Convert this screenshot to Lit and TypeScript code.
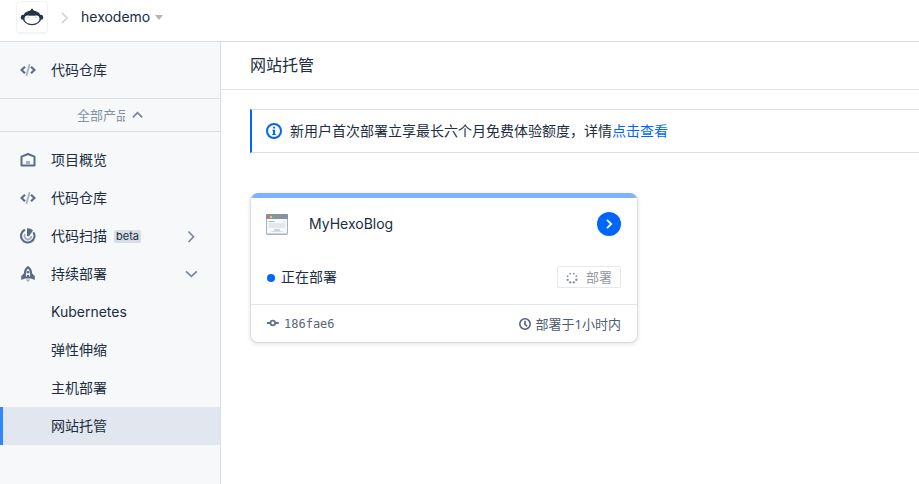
import { LitElement, html, css, svg, nothing, type TemplateResult } from "lit";
import { customElement } from "lit/decorators.js";
import { classMap } from "lit/directives/class-map.js";

const codeIcon = html`<svg class="icon" viewBox="0 0 16 16" fill="none" stroke="#5b6b83">
  <path d="M5 4.800 1.500 8 5 11.200M11 4.800 14.500 8 11 11.200" stroke-width="2.200" />
  <path d="M9.600 2.200 6.400 13.800" stroke="#a5b0c2" stroke-width="1.800" />
</svg>`;

const homeIcon = html`<svg class="icon" viewBox="0 0 16 16" fill="none">
  <path d="M1.500 13.500V4.700L8 2l6.500 2.700v8.800z" stroke="#5b6b83" stroke-width="2" stroke-linejoin="round" />
  <path d="M6 9h4v4H6z" fill="#a5b0c2" />
</svg>`;

const scanIcon = html`<svg class="icon" viewBox="0 0 16 16" fill="none">
  <path d="M5 1.700A6.700 6.700 0 1 0 13.400 4.200" stroke="#5b6b83" stroke-width="2.100" />
  <path d="M5.200 6A3.400 3.400 0 1 0 11.300 8" stroke="#a5b0c2" stroke-width="1.900" />
  <path d="M7 .300C9.600.200 11.500 1 13 2.400L8.800 8.600 7 8z" fill="#5b6b83" />
</svg>`;

const rocketIcon = html`<svg class="icon" viewBox="0 0 16 16" fill="none">
  <path d="M8 1.100C5.600 2.800 4.900 5 4.900 7.400V11.600h6.200V7.400C11.100 5 10.400 2.800 8 1.100z" stroke="#5b6b83" stroke-width="2" />
  <path d="M4.500 6.800 1.200 10.200V14L4.800 12.500zM11.500 6.800l3.300 3.400V14L11.200 12.500z" fill="#5b6b83" />
  <circle cx="8" cy="6.300" r="1.300" fill="#5b6b83" />
  <path d="M6.900 9h2.200v2.600H6.900z" fill="#5b6b83" />
  <path d="M5.800 13.400h4.400L8 16.200z" fill="#a5b0c2" />
</svg>`;

interface NavItem {
  label: string;
  icon?: TemplateResult;
  tag?: string;
  arrow?: "right" | "down";
  active?: boolean;
}

const NAV: NavItem[] = [
  { label: "项目概览", icon: homeIcon },
  { label: "代码仓库", icon: codeIcon },
  { label: "代码扫描", icon: scanIcon, tag: "beta", arrow: "right" },
  { label: "持续部署", icon: rocketIcon, arrow: "down" },
  { label: "Kubernetes" },
  { label: "弹性伸缩" },
  { label: "主机部署" },
  { label: "网站托管", active: true },
];

@customElement("top-bar")
export class TopBar extends LitElement {
  static styles = css`
    :host {
      display: flex;
      align-items: flex-start;
      height: 41px;
      border-bottom: 1px solid #d8dde6;
      padding-left: 16px;
      background: #fff;
      color: #202d40;
    }
    svg { display: block; }
    .logo {
      box-sizing: border-box;
      width: 32px;
      height: 32px;
      margin-top: 1px;
      padding: 6px 3px;
      border: 1px solid #f2f3f5;
      border-radius: 4px;
      box-shadow: 0 1px 2px rgba(32, 45, 64, 0.06);
    }
    .sep { margin: 12px 0 0 13px; }
    .name { margin-left: 12px; line-height: 34px; }
    .caret {
      margin: 15px 0 0 5px;
      border: 4px solid transparent;
      border-top: 5px solid #b3b5b9;
      border-bottom: 0;
    }
  `;

  render() {
    return html`
      <div class="logo">
        <svg width="24" height="18" viewBox="0 0 24 18">
          <ellipse cx="2.700" cy="9.300" rx="1.900" ry="2.500" fill="#263247" />
          <ellipse cx="21.300" cy="9.300" rx="1.900" ry="2.500" fill="#263247" />
          <ellipse cx="12" cy="9.800" rx="9.300" ry="7.400" fill="#263247" />
          <path d="M12 .300 15 4H9z" fill="#263247" />
          <path d="M4.500 11C4.500 8 6.200 7 8.700 7.500c1.300.3 2 .4 3.300.1 1.300.3 2 .2 3.300-.1 2.500-.5 4.200.5 4.200 3.500 0 3-3.300 4.900-7.500 4.900S4.500 14 4.500 11z" fill="#fff" />
          <path d="M7.400 9.300h1.800M14.800 9.300h1.800" stroke="#a8afba" stroke-width=".8" />
        </svg>
      </div>
      <svg class="sep" width="8" height="12" viewBox="0 0 8 12" fill="none" stroke="#d5d9e1" stroke-width="1.800"><path d="M1 .8 6.200 6 1 11.200" /></svg>
      <span class="name">hexodemo</span>
      <span class="caret"></span>
    `;
  }
}

@customElement("side-nav")
export class SideNav extends LitElement {
  static styles = css`
    :host {
      display: block;
      box-sizing: border-box;
      width: 221px;
      flex: none;
      background: #f6f8fa;
      border-right: 1px solid #d8dde6;
      color: #202d40;
    }
    .icon { width: 16px; height: 16px; flex: none; display: block; }
    .row {
      display: flex;
      align-items: center;
      box-sizing: border-box;
      height: 38px;
      padding: 0 22px 0 20px;
    }
    .pinned { height: 56px; }
    .label { margin-left: 15px; }
    .row.sub { padding-left: 36px; }
    .row.active { background: #e1e6ef; border-left: 3px solid #3385ff; padding-left: 33px; }
    .tag {
      margin: 1px 0 0 7px;
      height: 13px;
      line-height: 13px;
      padding: 0 2px;
      border-radius: 2px;
      background: #d8dde6;
      font-size: 11px;
    }
    .arrow { margin-left: auto; display: block; }
    .all {
      display: flex;
      justify-content: center;
      align-items: center;
      gap: 7px;
      height: 32px;
      border-top: 1px solid #d8dde6;
      border-bottom: 1px solid #d8dde6;
      font-size: 13px;
      color: #8592a6;
    }
    .clip { width: 48px; overflow: hidden; white-space: nowrap; }
    .list { padding-top: 9px; }
  `;

  private arrow(dir?: "right" | "down") {
    if (!dir) return nothing;
    const right = dir === "right";
    return html`<svg class="arrow" width="14" height="14" viewBox="0 0 14 14" fill="none" stroke="#76849c" stroke-width="1.600">
      ${right ? svg`<path d="M4.500 2.500 9.500 7.800 4.500 13" />` : svg`<path d="M2 4.300 7.400 9.300 12.800 4.300" />`}
    </svg>`;
  }

  private item(n: NavItem) {
    return html`<div class=${classMap({ row: true, sub: !n.icon, active: !!n.active })}>
      ${n.icon ?? nothing}<span class="label">${n.label}</span>
      ${n.tag ? html`<span class="tag">${n.tag}</span>` : nothing}${this.arrow(n.arrow)}
    </div>`;
  }

  render() {
    return html`
      <div class="row pinned">${codeIcon}<span class="label">代码仓库</span></div>
      <div class="all">
        <span class="clip">全部产品</span>
        <svg width="11" height="8" viewBox="0 0 11 8" fill="none" stroke="#76849c" stroke-width="1.600"><path d="M.8 6.400 5.500 1.700l4.700 4.700" /></svg>
      </div>
      <div class="list">${NAV.map((n) => this.item(n))}</div>
    `;
  }
}

@customElement("site-card")
export class SiteCard extends LitElement {
  static styles = css`
    :host {
      display: block;
      box-sizing: border-box;
      width: 388px;
      height: 150px;
      overflow: hidden;
      border: 1px solid #d8dde6;
      border-top: 0;
      border-radius: 8px;
      box-shadow: 0 1px 4px rgba(32, 45, 64, 0.14);
      background: #fff;
      color: #202d40;
    }
    svg { display: block; }
    .bar { height: 5px; background: #80b1ff; }
    .row { display: flex; align-items: center; padding: 0 16px 0 15px; }
    .head { height: 52px; }
    .name { margin-left: 21px; }
    .go {
      display: grid;
      place-items: center;
      width: 24px;
      height: 24px;
      margin-left: auto;
      border-radius: 50%;
      background: #06f;
    }
    .state { height: 54px; padding-left: 16px; }
    .dot { width: 8px; height: 8px; border-radius: 50%; background: #06f; margin: 2px 6px 0 0; }
    .button {
      display: flex;
      align-items: center;
      gap: 8px;
      box-sizing: border-box;
      width: 64px;
      height: 22px;
      margin-left: auto;
      padding: 0 8px;
      border: 1px solid #e6e9ee;
      border-radius: 2px;
      color: #9499a2;
      font-size: 13px;
    }
    .button svg { margin-top: 2px; }
    .foot { height: 38px; border-top: 1px solid #e1e5eb; font-size: 13px; color: #4f5c70; }
    .hash { margin-left: 5px; font: 12px "DejaVu Sans Mono", monospace; color: #596579; }
    .commit { margin-top: -2px; }
    .time { display: flex; align-items: center; gap: 5px; margin-left: auto; font-family: "Noto Sans", "Noto Sans CJK SC", sans-serif; }
  `;

  render() {
    const dots = Array.from({ length: 8 }, (_, i) => {
      const a = ((i * 45 + 22) * Math.PI) / 180;
      return svg`<circle cx=${6 + 4.7 * Math.cos(a)} cy=${6 + 4.7 * Math.sin(a)} r=${i < 4 ? 1.2 : 0.9} fill="#8e949e" />`;
    });
    return html`
      <div class="bar"></div>
      <div class="row head">
        <svg width="22" height="21" viewBox="0 0 22 21">
          <rect x=".5" y=".5" width="21" height="20" rx="1" fill="#f8f9fa" stroke="#a5b0c0" />
          <path d="M0 1Q0 0 1 0H21Q22 0 22 1V5H0z" fill="#8592a6" />
          <path d="M1.500 2h2v2h-2z" fill="#f56061" /><path d="M4 2h2v2H4z" fill="#f2c94c" /><path d="M6.500 2h2v2h-2z" fill="#64b867" />
          <path d="M2.500 7.500h6" stroke="#a5b0c0" /><path d="M17 7.500h2.500" stroke="#d8dde6" />
          <path d="M2.500 9h17v5h-17z" fill="#e4e8ed" />
          <path d="M8 15h6v2H8z" fill="#cbd3e0" /><path d="M5.500 17.500h11" stroke="#d8dde6" />
          <path d="M.5 20h21" stroke="#a5b0c0" />
        </svg>
        <span class="name">MyHexoBlog</span>
        <span class="go"><svg width="12" height="12" viewBox="0 0 12 12" fill="none" stroke="#fff" stroke-width="1.800"><path d="M4 1.800 8.200 6 4 10.200" /></svg></span>
      </div>
      <div class="row state">
        <span class="dot"></span><span>正在部署</span>
        <span class="button"><svg width="12" height="12" viewBox="0 0 12 12">${dots}</svg><span>部署</span></span>
      </div>
      <div class="row foot">
        <svg class="commit" width="13" height="10" viewBox="0 0 13 10" fill="none" stroke="#65738a" stroke-width="1.800"><path d="M1 5h3.500M9 5h3.800" /><circle cx="6.800" cy="5" r="2.300" /></svg>
        <span class="hash">186fae6</span>
        <span class="time">
          <svg width="12" height="12" viewBox="0 0 12 12" fill="none" stroke="#56647b" stroke-width="1.600"><circle cx="6" cy="6" r="5.200" /><path d="M6 2.800V6.300L8 8.300" /></svg>
          <span>部署于1小时内</span>
        </span>
      </div>
    `;
  }
}

@customElement("app-root")
export class AppRoot extends LitElement {
  static styles = css`
    :host {
      display: flex;
      flex-direction: column;
      height: 100vh;
      overflow: hidden;
      background: #fff;
      color: #202d40;
      font: 14px/20px Inter, "Noto Sans CJK SC", sans-serif;
    }
    .body { display: flex; flex: 1; min-height: 0; }
    main { flex: 1; min-width: 0; }
    .title {
      height: 47px;
      line-height: 46px;
      padding-left: 29px;
      border-bottom: 1px solid #e1e4e8;
      font-size: 16px;
    }
    .content { padding: 19px 0 0 29px; }
    .notice {
      display: flex;
      align-items: center;
      box-sizing: border-box;
      height: 44px;
      padding-left: 14px;
      border: 1px solid #d8dde6;
      border-left: 2px solid #06f;
      border-right: 0;
    }
    .notice svg { display: block; margin-right: 8px; }
    .link { color: #06f; }
    site-card { margin-top: 40px; }
  `;

  render() {
    return html`
      <top-bar></top-bar>
      <div class="body">
        <side-nav></side-nav>
        <main>
          <div class="title">网站托管</div>
          <div class="content">
            <div class="notice">
              <svg width="16" height="16" viewBox="0 0 16 16" fill="none"><circle cx="8" cy="8" r="7" stroke="#06f" stroke-width="2" /><path d="M7 3.800h2v1.700H7zM6.200 6.800H9V11h.8v1H6.200v-1H7V7.800h-.8z" fill="#06f" /></svg>
              <span>新用户首次部署立享最长六个月免费体验额度，详情<span class="link">点击查看</span></span>
            </div>
            <site-card></site-card>
          </div>
        </main>
      </div>
    `;
  }
}
